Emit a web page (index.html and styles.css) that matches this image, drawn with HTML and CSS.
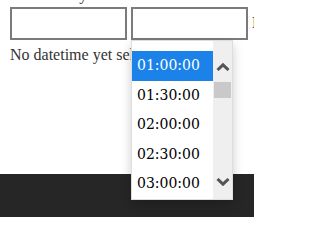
FILE: index.html
```
<!DOCTYPE html>
<html>
<head>
<meta charset="utf-8">
<link rel="stylesheet" href="styles.css">
</head>
<body>
<div class="content">
  <p class="intro">Select a day and time</p>
  <div class="row">
    <input class="field" type="text">
    <input class="field" type="text">
    <span class="label">End time</span>
  </div>
  <p class="status">No datetime yet selected</p>

  <div class="picker">
    <ul class="list">
      <li>00:30:00</li>
      <li class="selected">01:00:00</li>
      <li>01:30:00</li>
      <li>02:00:00</li>
      <li>02:30:00</li>
      <li>03:00:00</li>
      <li>03:30:00</li>
    </ul>
    <div class="scrollbar">
      <svg class="arrow" width="14" height="8" viewBox="0 0 14 8"><polyline points="1.5,7 7,1.8 12.5,7" fill="none" stroke="#555" stroke-width="3"/></svg>
      <div class="thumb"></div>
      <div class="track-space"></div>
      <svg class="arrow" width="14" height="8" viewBox="0 0 14 8"><polyline points="1.5,1 7,6.2 12.5,1" fill="none" stroke="#555" stroke-width="3"/></svg>
    </div>
  </div>
</div>
<footer class="footer"></footer>
</body>
</html>
```
FILE: styles.css
```
html, body {
  margin: 0;
  padding: 0;
  overflow: hidden;
  background: #fff;
  width: 254px;
  height: 217px;
}
body {
  font-family: "Liberation Serif", "Times New Roman", serif;
  font-size: 16px;
  color: #333;
}
.content {
  display: flow-root;
  position: relative;
  height: 174px;
  padding-left: 10px;
  box-sizing: border-box;
}
.intro {
  margin: -15px 0 2px;
  line-height: 20px;
  white-space: nowrap;
  overflow: hidden;
}
.row {
  display: flex;
  gap: 4px;
  align-items: flex-start;
  height: 33px;
  white-space: nowrap;
  overflow: hidden;
}
.field {
  flex: none;
  width: 117px;
  height: 33px;
  box-sizing: border-box;
  border: 2px solid #7b7b7b;
  border-radius: 0;
  background: #fff;
  margin: 0;
  padding: 0 4px;
  font: inherit;
  outline: none;
}
.label {
  flex: none;
  line-height: 20px;
  margin-top: 6px;
}
.status {
  margin: 5px 0 0;
  line-height: 20px;
  white-space: nowrap;
  overflow: hidden;
}
.footer {
  height: 43px;
  background: #262626;
}
.picker {
  position: absolute;
  left: 131px;
  top: 40px;
  width: 102px;
  height: 160px;
  box-sizing: border-box;
  border: 1px solid #dedede;
  background: #fff;
  box-shadow: 0 5px 10px rgba(0, 0, 0, 0.2);
  display: flex;
  z-index: 10;
}
.list {
  flex: 1;
  margin: 0;
  padding: 0;
  list-style: none;
  overflow: hidden;
  font-family: "DejaVu Serif", serif;
  font-size: 14px;
  color: #000;
}
.list li {
  height: 29.5px;
  line-height: 29.5px;
  padding-left: 5px;
  white-space: nowrap;
}
.list li:first-child {
  margin-top: -19.5px;
}
.list li.selected {
  background: #1a82e8;
  color: #fff;
}
.scrollbar {
  flex: none;
  width: 19px;
  background: #efefef;
  display: flex;
  flex-direction: column;
  align-items: center;
  padding: 21.5px 0 13px;
  box-sizing: border-box;
}
.arrow {
  display: block;
  flex: none;
}
.thumb {
  flex: none;
  width: 17px;
  height: 16px;
  margin-top: 11.5px;
  background: #c9c9c9;
}
.track-space {
  flex: 1;
}
```
